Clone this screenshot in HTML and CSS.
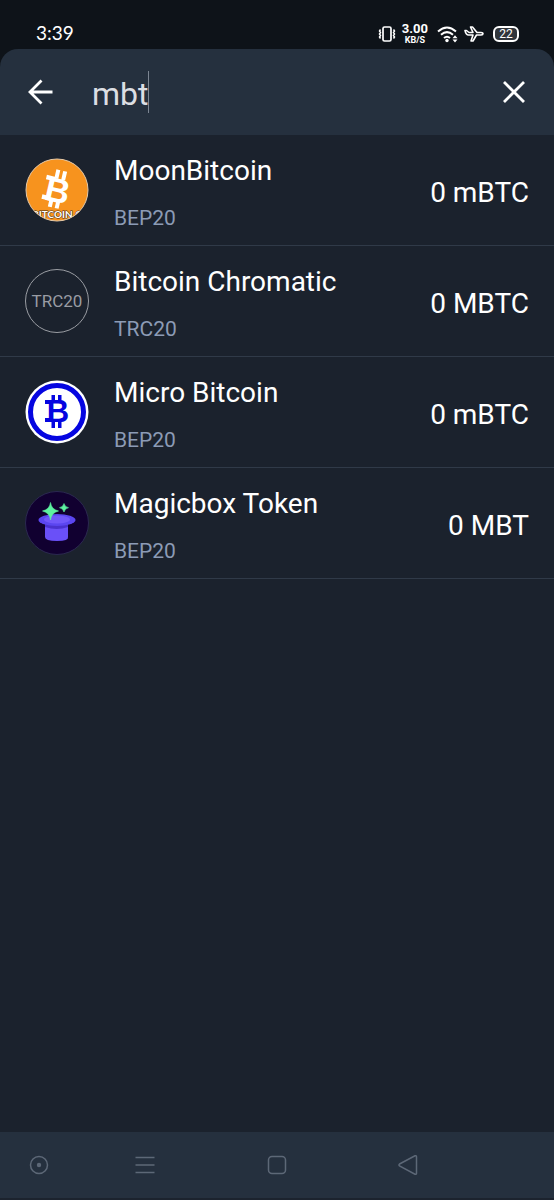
FILE: index.html
```html
<!DOCTYPE html>
<html lang="en">
<head>
<meta charset="utf-8">
<meta name="viewport" content="width=device-width, initial-scale=1">
<title>Search tokens</title>
<link rel="stylesheet" href="styles.css">
</head>
<body>
<div class="screen">
  <div class="status">
    <time class="clock">3:39</time>
    <div class="indicators">
      <svg width="18" height="16" viewBox="0 0 18 16" fill="none" stroke="currentColor" aria-hidden="true">
        <rect x="5" y="1" width="8" height="14" rx="1.5" stroke-width="1.7"/>
        <path d="M2.500 3.500l-1 1.500 1 1.500-1 1.500 1 1.500-1 1.500 1 1.500M15.500 3.500l1 1.500-1 1.500 1 1.500-1 1.500 1 1.500-1 1.500" stroke-width="1.500"/>
      </svg>
      <div class="speed"><span class="speed-value">3.00</span><span class="speed-unit">KB/S</span></div>
      <svg class="wifi" width="21" height="17" viewBox="0 0 21 17" fill="none" stroke="currentColor" aria-hidden="true">
        <path d="M1 5.500Q10 -2.500 19 5.500M4 8.800Q10 3.500 16 8.800M7 12Q10 9.500 13 12" stroke-width="2"/>
        <circle cx="10" cy="14.500" r="1.700" fill="currentColor" stroke="none"/>
        <path d="M15.500 12.200l2.500-3 2.500 3zM15.500 13.500h5l-2.500 3z" fill="currentColor" stroke="none"/>
      </svg>
      <svg class="plane" width="20" height="16" viewBox="0 0 20 16" fill="none" stroke="currentColor" stroke-width="1.600" stroke-linejoin="round" aria-hidden="true">
        <path d="M1 4.500h1.500L5 6.500h4L6.500 1h2L13 6.500h4q2 0 2 1.200T17 9h-4.500L9 15H7l2-6H4.500Q2 9 1 4.500z"/>
      </svg>
      <span class="battery">22</span>
    </div>
  </div>

  <form class="search">
    <button class="icon-button" type="button" aria-label="Back">
      <svg width="28" height="28" viewBox="0 0 28 28" fill="none" stroke="currentColor" stroke-width="2.800" aria-hidden="true"><path d="M26.500 14H4M15.500 2.500L4 14l11.500 11.500"/></svg>
    </button>
    <div class="field">
      <input class="query" type="text" value="mbt" aria-label="Search tokens">
      <span class="caret"></span>
    </div>
    <button class="icon-button" type="button" aria-label="Clear">
      <svg width="24" height="24" viewBox="0 0 24 24" fill="none" stroke="currentColor" stroke-width="2.800" aria-hidden="true"><path d="M2 2l20 20M22 2L2 22"/></svg>
    </button>
  </form>

  <main class="tokens">
    <a class="token" href="#moonbitcoin">
      <svg class="logo" viewBox="0 0 64 64" aria-hidden="true">
        <clipPath id="coin"><circle cx="32" cy="32" r="31"/></clipPath>
        <circle cx="32" cy="32" r="31" fill="#f7931e"/>
        <g transform="rotate(13 32 31)" fill="#fff">
          <text class="coin-letter" x="33" y="44" text-anchor="middle">B</text>
          <path d="M27 12h4v9h-4zM34 12h4v9h-4zM27 42h4v8h-4zM34 42h4v8h-4zM19 19.500h8V24h-8zM19 39.500h8V44h-8z"/>
        </g>
        <g clip-path="url(#coin)"><text class="coin-name" x="32" y="60" text-anchor="middle">BITCOIN C</text></g>
        <circle cx="32" cy="32" r="31" fill="none" stroke="#e5c9a8" stroke-width="1"/>
      </svg>
      <div class="info"><span class="name">MoonBitcoin</span><span class="network">BEP20</span></div>
      <span class="amount">0 mBTC</span>
    </a>
    <a class="token" href="#bitcoin-chromatic">
      <span class="logo logo-text">TRC20</span>
      <div class="info"><span class="name">Bitcoin Chromatic</span><span class="network">TRC20</span></div>
      <span class="amount">0 MBTC</span>
    </a>
    <a class="token" href="#micro-bitcoin">
      <svg class="logo" viewBox="0 0 64 64" aria-hidden="true">
        <circle cx="32" cy="32" r="31.500" fill="#fff"/>
        <circle cx="32" cy="32" r="26.500" fill="none" stroke="#0505e0" stroke-width="5"/>
        <g fill="#0505e0">
          <text class="coin-letter coin-letter-small" x="33" y="42" text-anchor="middle">B</text>
          <path d="M26.500 15H30v6h-3.500zM33 15h3.500v6H33zM26.500 42H30v6h-3.500zM33 42h3.500v6H33zM20 20h6v4h-6zM20 38h6v4h-6z"/>
        </g>
      </svg>
      <div class="info"><span class="name">Micro Bitcoin</span><span class="network">BEP20</span></div>
      <span class="amount">0 mBTC</span>
    </a>
    <a class="token" href="#magicbox">
      <svg class="logo" viewBox="0 0 64 64" aria-hidden="true">
        <circle cx="32" cy="32" r="31.500" fill="#110030" stroke="#2b2850"/>
        <path d="M20 31v15q0 4 12 4t11-4V31z" fill="#6a50f8"/>
        <path d="M20 36q12 4 23 0v-4H20z" fill="#4a32cf"/>
        <ellipse cx="32" cy="29" rx="18.500" ry="6" fill="#5b46f0"/>
        <ellipse cx="32" cy="28.500" rx="13" ry="4" fill="#7158fa"/>
        <path d="M25.500 11.500q1 7 8 8.500-7 1.500-8 9-1-7.500-8-9 7-1.500 8-8.500zM39 12.500q.8 3.500 4.500 4.200-3.700.8-4.500 4.300-.8-3.500-4.500-4.300 3.700-.7 4.500-4.200z" fill="#5df2a0" stroke="#5df2a0" stroke-width=".6"/>
      </svg>
      <div class="info"><span class="name">Magicbox Token</span><span class="network">BEP20</span></div>
      <span class="amount">0 MBT</span>
    </a>
  </main>

  <nav class="system-nav" aria-label="System">
    <button class="nav-button" type="button" aria-label="Assist"><svg width="20" height="20" viewBox="0 0 20 20" fill="none" stroke="currentColor" stroke-width="1.500"><circle cx="10" cy="10" r="8.500"/><circle cx="10" cy="10" r="2.200" fill="currentColor" stroke="none"/></svg></button>
    <button class="nav-button" type="button" aria-label="Menu"><svg width="20" height="20" viewBox="0 0 20 20" fill="none" stroke="currentColor" stroke-width="1.500"><path d="M.5 2.500h19M.5 10h19M.5 17.500h19"/></svg></button>
    <button class="nav-button" type="button" aria-label="Home"><svg width="20" height="20" viewBox="0 0 20 20" fill="none" stroke="currentColor" stroke-width="1.500"><rect x="1.500" y="1.500" width="17" height="17" rx="3.500"/></svg></button>
    <button class="nav-button" type="button" aria-label="Back to previous app"><svg width="20" height="20" viewBox="0 0 20 20" fill="none" stroke="currentColor" stroke-width="1.500"><path d="M1.500 9L17 .8q1.500-.5 1.500 1v16.400q0 1.500-1.500 1L1.500 11q-1-1 0-2z"/></svg></button>
  </nav>
</div>
</body>
</html>
```

FILE: styles.css
```css
* {
  box-sizing: border-box;
}

body {
  margin: 0;
  background: #0e1319;
  color: #fff;
  font-family: Roboto, "Noto Sans", sans-serif;
}

.screen {
  display: flex;
  flex-direction: column;
  min-height: 100vh;
}

.status {
  display: flex;
  align-items: flex-end;
  justify-content: space-between;
  height: 49px;
  padding: 0 35px 3px 36px;
}

.clock {
  font-family: Lato, sans-serif;
  font-size: 19px;
  line-height: 26px;
}

.indicators {
  display: flex;
  align-items: center;
  gap: 6px;
  height: 24px;
}

.speed {
  display: flex;
  flex-direction: column;
  align-items: center;
  font-weight: 700;
}

.speed-value {
  font-size: 13px;
  line-height: 12px;
}

.speed-unit {
  font-size: 9px;
  line-height: 11px;
}

.wifi {
  margin-left: 3px;
}

.battery {
  width: 26px;
  margin-left: 3px;
  border: 2px solid #fff;
  border-radius: 6px;
  background: #30353b;
  font-size: 12px;
  line-height: 12px;
  text-align: center;
}

.search {
  display: flex;
  align-items: center;
  height: 86px;
  padding: 0 20px;
  border-radius: 18px 18px 0 0;
  background: #25303e;
}

.icon-button,
.nav-button {
  display: flex;
  align-items: center;
  justify-content: center;
  padding: 0;
  border: 0;
  background: none;
  color: inherit;
}

.icon-button {
  width: 40px;
  height: 40px;
}

.field {
  position: relative;
  flex: 1;
  min-width: 0;
  margin-left: 32px;
}

.query {
  width: 100%;
  height: 42px;
  padding: 3px 0 0;
  border: 0;
  outline: 0;
  background: none;
  color: #dcdee3;
  font: inherit;
  font-size: 32px;
}

.caret {
  position: absolute;
  top: 0;
  left: 56px;
  width: 1px;
  height: 42px;
  background: #7c8592;
}

.tokens {
  flex: 1;
  background: #1b222d;
}

.token {
  display: flex;
  align-items: center;
  height: 111px;
  padding: 0 25px;
  border-bottom: 1px solid #303a48;
  color: inherit;
  text-decoration: none;
}

.logo {
  flex: none;
  width: 64px;
  height: 64px;
}

.logo-text {
  display: flex;
  align-items: center;
  justify-content: center;
  border: 1px solid #9a9da3;
  border-radius: 50%;
  color: #999ca3;
  font-size: 17px;
}

.coin-letter {
  font: 700 34px "Liberation Sans", sans-serif;
}

.coin-letter-small {
  font-size: 31px;
}

.coin-name {
  fill: #fff;
  stroke: #3a2a18;
  stroke-width: 1px;
  paint-order: stroke;
  font: 700 10px Lato, sans-serif;
}

.info {
  display: flex;
  flex: 1;
  flex-direction: column;
  gap: 17px;
  margin-left: 25px;
  padding-top: 4px;
}

.name,
.amount {
  font-size: 28px;
  line-height: 34px;
}

.amount {
  padding-top: 5px;
}

.network {
  color: #8c9bb5;
  font-size: 21px;
  line-height: 26px;
}

.system-nav {
  display: grid;
  grid-template-columns: 78fr 134fr 130fr 132fr 80fr;
  height: 68px;
  border-bottom: 2px solid #1c232e;
  background: #25303e;
  color: #5d6877;
}
```
